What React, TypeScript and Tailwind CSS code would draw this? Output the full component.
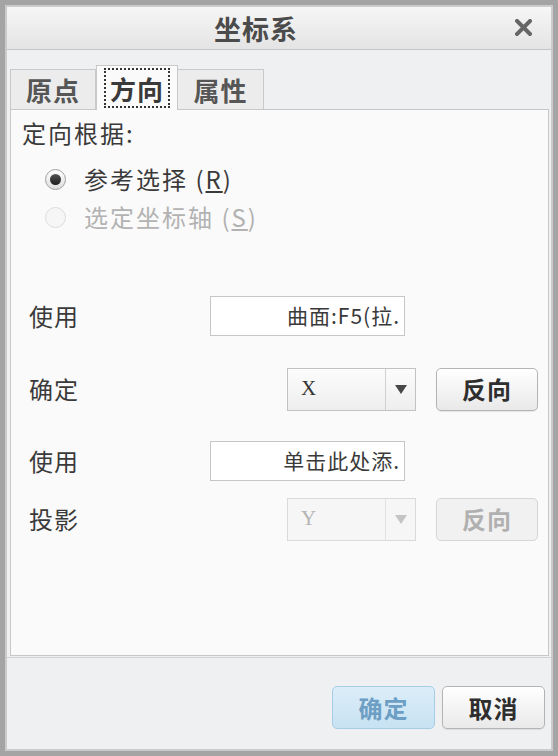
import React from 'react';

const Radio = ({ checked, disabled }: { checked?: boolean; disabled?: boolean }) => (
  <span
    className={`w-[21px] h-[21px] rounded-full border flex items-center justify-center ${
      disabled ? 'border-[#dcdcdc] bg-[#f6f6f6]' : 'border-[#a0a0a0] bg-gradient-to-b from-[#ffffff] to-[#dedede]'
    }`}
  >
    {checked && <span className="w-[11px] h-[11px] rounded-full bg-gradient-to-b from-[#555] to-[#1e1e1e]" />}
  </span>
);

const Select = ({ value, disabled }: { value: string; disabled?: boolean }) => (
  <div
    className={`w-[129px] h-[43px] flex border ${
      disabled ? 'border-[#dadada] bg-[#f6f6f6]' : 'border-[#c2c2c2] bg-gradient-to-b from-[#fcfcfc] to-[#eeeeee]'
    }`}
  >
    <div
      className={`w-[97px] flex items-center pl-[13px] font-['Liberation_Serif',serif] text-[21px] ${
        disabled ? 'text-[#b4b4b4]' : 'text-[#333]'
      }`}
    >
      {value}
    </div>
    <div className={`flex-1 flex items-center justify-center border-l ${disabled ? 'border-[#e2e2e2]' : 'border-[#d0d0d0]'}`}>
      <svg width="12" height="9" viewBox="0 0 12 9">
        <path d="M0 0 L12 0 L6 9 Z" fill={disabled ? '#c4c4c4' : '#474747'} />
      </svg>
    </div>
  </div>
);

const Button = ({ label, disabled }: { label: string; disabled?: boolean }) => (
  <button
    className={`w-[102px] h-[43px] rounded-[5px] border text-[24px] font-bold leading-none tracking-[1px] ${
      disabled
        ? 'border-[#d6d6d6] bg-[#f1f1f1] text-[#b0b0b0]'
        : 'border-[#b4b4b4] bg-gradient-to-b from-[#ffffff] to-[#e9e9e9] text-[#2e2e2e] shadow-[0_1px_1px_rgba(0,0,0,0.08)]'
    }`}
  >
    {label}
  </button>
);

const Field = ({ text }: { text: string }) => (
  <div className="w-[195px] h-[40px] border border-[#c6c6c6] bg-white flex items-center justify-end pr-[4px] text-[21px] text-[#3a3a3a] tracking-[1px]">
    {text}
  </div>
);

export default function App() {
  return (
    <div className="w-[558px] h-[756px] bg-[#a4a4a4] p-[5px] font-['Noto_Sans_CJK_SC',sans-serif]">
      <div className="h-full bg-[#cbcbcb] p-[2px]">
        <div className="h-full flex flex-col bg-[#eef0f2]">
          {/* TITLE BAR */}
          <div className="h-[43px] shrink-0 relative flex items-center justify-center pr-[46px] bg-gradient-to-b from-[#f6f6f6] to-[#e4e4e4] border-b border-[#c6c6c6]">
            <span className="text-[27px] font-bold text-[#4b4b4b] leading-none tracking-[1px]">坐标系</span>
            <svg className="absolute right-[19px] top-[12px]" width="17" height="17" viewBox="0 0 17 17">
              <path d="M2 2 L15 15 M15 2 L2 15" stroke="#666" strokeWidth="4" strokeLinecap="square" />
            </svg>
          </div>

          {/* BODY */}
          <div className="flex-1 flex flex-col pl-[3px] pr-[2px]">
            {/* TABS */}
            <div className="h-[45px] mt-[14px] flex items-end shrink-0">
              <div className="w-[86px] h-[40px] border border-b-0 border-[#c9c9c9] bg-[#ececec] flex items-center justify-center text-[26px] font-bold text-[#565656] leading-none tracking-[1px]">
                原点
              </div>
              <div className="w-[82px] h-[45px] border border-b-0 border-[#c9c9c9] bg-[#fafafa] flex items-center justify-center -mb-px relative z-10">
                <span className="outline-dotted outline-2 outline-[#333] px-[4px] pt-[6px] pb-[4px] text-[26px] font-bold text-[#3a3a3a] leading-none tracking-[1px]">
                  方向
                </span>
              </div>
              <div className="w-[86px] h-[40px] border border-b-0 border-l-0 border-[#c9c9c9] bg-[#ececec] flex items-center justify-center text-[26px] font-bold text-[#565656] leading-none tracking-[1px]">
                属性
              </div>
            </div>

            {/* CONTENT PANEL */}
            <div className="h-[547px] shrink-0 border border-[#c8c8c8] bg-[#fafafa] flex flex-col text-[#3a3a3a]">
              <div className="mt-[8px] pl-[11px] h-[30px] flex items-center text-[24px] tracking-[2px] leading-none">定向根据:</div>

              <div className="mt-[16px] pl-[34px] h-[30px] flex items-center gap-[18px]">
                <Radio checked />
                <span className="text-[24px] tracking-[2px] leading-none">
                  参考选择 (<span className="underline">R</span>)
                </span>
              </div>
              <div className="mt-[8px] pl-[34px] h-[30px] flex items-center gap-[18px]">
                <Radio disabled />
                <span className="text-[24px] tracking-[2px] leading-none text-[#b2b2b2]">
                  选定坐标轴 (<span className="underline">S</span>)
                </span>
              </div>

              <div className="mt-[64px] pl-[18px] h-[40px] flex items-center">
                <span className="w-[181px] text-[24px] leading-none tracking-[1px]">使用</span>
                <Field text="曲面:F5(拉." />
              </div>

              <div className="mt-[31px] pl-[18px] h-[44px] flex items-center">
                <span className="w-[258px] text-[24px] leading-none tracking-[1px]">确定</span>
                <Select value="X" />
                <div className="ml-[20px]">
                  <Button label="反向" />
                </div>
              </div>

              <div className="mt-[30px] pl-[18px] h-[40px] flex items-center">
                <span className="w-[181px] text-[24px] leading-none tracking-[1px]">使用</span>
                <Field text="单击此处添." />
              </div>

              <div className="mt-[16px] pl-[18px] h-[44px] flex items-center">
                <span className="w-[258px] text-[24px] leading-none tracking-[1px]">投影</span>
                <Select value="Y" disabled />
                <div className="ml-[20px]">
                  <Button label="反向" disabled />
                </div>
              </div>
            </div>
          </div>

          {/* FOOTER */}
          <div className="h-[92px] shrink-0 border-t border-[#d2d2d2] flex items-start justify-end gap-[7px] pt-[28px] pr-[6px]">
            <button className="w-[103px] h-[43px] rounded-[5px] border border-[#a6cde6] bg-gradient-to-b from-[#dcedf8] to-[#c7e2f3] text-[24px] font-bold text-[#6d9ec3] leading-none tracking-[1px]">
              确定
            </button>
            <button className="w-[103px] h-[43px] rounded-[5px] border border-[#b4b4b4] bg-gradient-to-b from-[#ffffff] to-[#e9e9e9] text-[24px] font-bold text-[#2e2e2e] leading-none tracking-[1px] shadow-[0_1px_1px_rgba(0,0,0,0.08)]">
              取消
            </button>
          </div>
        </div>
      </div>
    </div>
  );
}
